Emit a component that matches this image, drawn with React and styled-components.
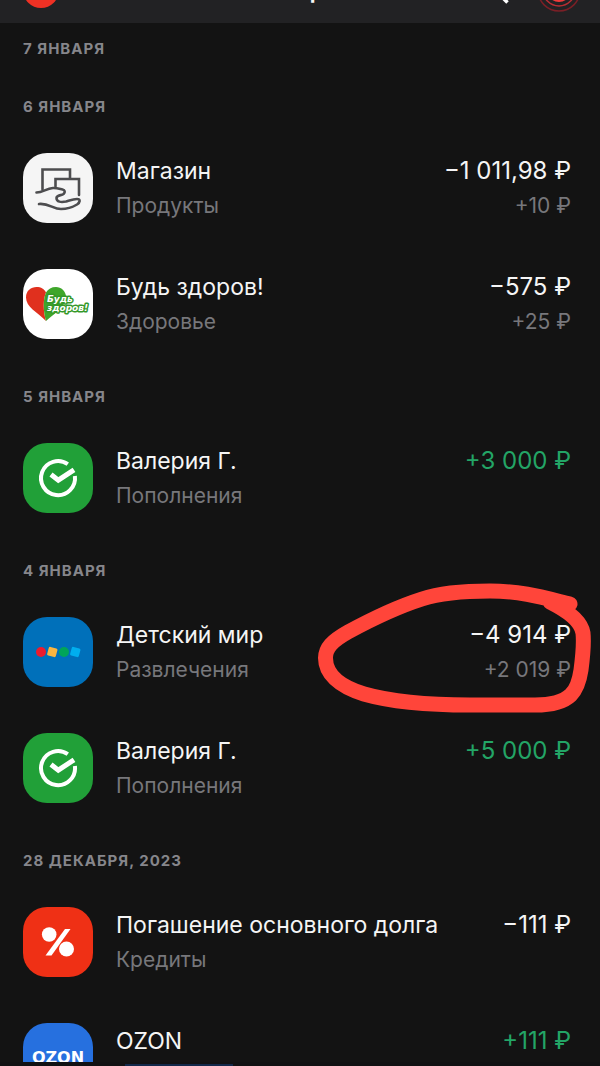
import styled, { createGlobalStyle } from "styled-components";

const sections = [
  { date: "7 января", items: [] },
  {
    date: "6 января",
    items: [
      { icon: "shop", title: "Магазин", category: "Продукты", amount: "−1 011,98 ₽", bonus: "+10 ₽" },
      { icon: "health", title: "Будь здоров!", category: "Здоровье", amount: "−575 ₽", bonus: "+25 ₽" },
    ],
  },
  {
    date: "5 января",
    items: [
      { icon: "sber", title: "Валерия Г.", category: "Пополнения", amount: "+3 000 ₽", income: true },
    ],
  },
  {
    date: "4 января",
    items: [
      { icon: "toys", title: "Детский мир", category: "Развлечения", amount: "−4 914 ₽", bonus: "+2 019 ₽", marked: true },
      { icon: "sber", title: "Валерия Г.", category: "Пополнения", amount: "+5 000 ₽", income: true },
    ],
  },
  {
    date: "28 декабря, 2023",
    items: [
      { icon: "percent", title: "Погашение основного долга", category: "Кредиты", amount: "−111 ₽" },
      { icon: "ozon", title: "OZON", amount: "+111 ₽", income: true },
    ],
  },
];

const tileColors = {
  shop: "#f5f5f5",
  health: "#ffffff",
  sber: "#21a038",
  toys: "#0070ba",
  percent: "#ef3015",
  ozon: "#2670df",
};

function Logo({ name }) {
  switch (name) {
    case "shop":
      return (
        <svg viewBox="0 0 70 70" fill="none" stroke="#4d4d4f" strokeWidth="2.6" strokeLinecap="round">
          <path d="M19.5 36.5V16.5h27.5V25.500" />
          <path d="M32.500 33.500V26h23.500v16" />
          <path d="M13.500 39.500C20 39.500 23 35.500 30 35C34 34.800 37 36 39.500 36.500C42 37 42.500 39 40.500 41C38.500 42.500 33.500 42 33.500 45C33.500 49 38 49.500 43 48.500C48 47 50.500 46 54 46C58 46 57 49.500 54 51.500C49 54.500 44 56 38 56C30 56 26 50 16 51" />
        </svg>
      );
    case "health":
      return (
        <svg viewBox="0 0 70 70">
          <path d="M23 52C14 43 3 38 3 28.500C3 21.500 8 18 13.500 18C18 18 21.500 20 23 23.500C20 30 20 42 23 52Z" fill="#e0301e" />
          <path d="M23 52C20 42 20 30 23 23.500C25 20 28.500 18 33 18C38 18 43 22 43 28C43 38 32 44 23 52Z" fill="#3fa62b" />
          <g
            fontFamily="'DejaVu Sans', sans-serif"
            fontWeight="700"
            fontStyle="italic"
            fontSize="9"
            fill="#fff"
            stroke="#35982a"
            strokeWidth="3"
            paintOrder="stroke"
            strokeLinejoin="round"
          >
            <text x="24" y="33">Будь</text>
            <text x="24" y="42">здоров!</text>
          </g>
        </svg>
      );
    case "sber":
      return (
        <svg viewBox="0 0 70 70" fill="none" stroke="#fff" strokeWidth="4">
          <path d="M44.800 21.200A17 17 0 1 0 51.900 33" />
          <path d="M28 31.500L35.300 37.200L51 26.800" strokeWidth="5" />
        </svg>
      );
    case "toys":
      return (
        <svg viewBox="0 0 70 70">
          <circle cx="18" cy="35" r="5" fill="#ed1c2e" />
          <rect x="24.800" y="30.500" width="9" height="9" rx="1.500" fill="#fbb540" transform="rotate(15 29.300 35)" />
          <circle cx="41" cy="35" r="5" fill="#00a55a" />
          <rect x="47.800" y="30.500" width="9" height="9" rx="1.500" fill="#00aeef" transform="rotate(15 52.300 35)" />
        </svg>
      );
    case "percent":
      return (
        <svg viewBox="0 0 70 70" fill="#fff">
          <circle cx="26.200" cy="27.500" r="7.300" />
          <circle cx="43.500" cy="42" r="7.500" />
          <path d="M42 22h5.500L28.500 48.500H22.500Z" />
        </svg>
      );
    default:
      return <Wordmark>OZON</Wordmark>;
  }
}

function Transaction({ icon, title, category, amount, bonus, income, marked }) {
  return (
    <Row>
      <Tile $color={tileColors[icon]}>
        <Logo name={icon} />
      </Tile>
      <Details>
        <Title>{title}</Title>
        {category && <Note>{category}</Note>}
      </Details>
      <Sums>
        <Amount $income={income}>{amount}</Amount>
        {bonus && <Note>{bonus}</Note>}
      </Sums>
      {marked && (
        <Marker viewBox="0 0 290 145" aria-hidden="true">
          <path
            d="M260 29C235 23 212 16 180 16C150 16 130 18 112 24C90 31 62 44 38 57C22 66 15.500 73 15.500 83C15.500 98 28 111 54 119C82 127 120 130 160 130L225 130C262 130 268 115 271 95C273 80 274 68 273 58C271 45 256 35 240 27"
            fill="none"
            stroke="#ff453a"
            strokeWidth="15"
            strokeLinecap="round"
            strokeLinejoin="round"
          />
        </Marker>
      )}
    </Row>
  );
}

function App() {
  return (
    <Screen>
      <GlobalStyle />
      <TopBar>
        <BarContent>
          <Avatar />
          <Heading>История</Heading>
          <BarActions>
            <IconButton type="button" aria-label="Поиск">
              <svg width="28" height="28" viewBox="0 0 28 28" fill="none" stroke="#fff" strokeWidth="3.500">
                <circle cx="12" cy="12" r="10" />
                <path d="M19 19l7.500 7.500" />
              </svg>
            </IconButton>
            <IconButton type="button" aria-label="Сканер">
              <svg width="44" height="44" viewBox="0 0 44 44" fill="none" strokeWidth="1.500">
                <circle cx="22" cy="22" r="21" stroke="#7a1f26" />
                <circle cx="22" cy="22" r="16" stroke="#b82d33" />
                <circle cx="22" cy="22" r="11" stroke="#ef3a3a" strokeWidth="2" />
              </svg>
            </IconButton>
          </BarActions>
        </BarContent>
      </TopBar>
      <History>
        {sections.map(({ date, items }) => (
          <Section key={date}>
            <DateTitle>{date}</DateTitle>
            <List>
              {items.map((item) => (
                <Transaction key={item.title} {...item} />
              ))}
            </List>
          </Section>
        ))}
      </History>
      <BottomEdge />
    </Screen>
  );
}

export default App;

const GlobalStyle = createGlobalStyle`
  * {
    box-sizing: border-box;
  }

  body {
    margin: 0;
    background: #131313;
    color: #f5f5f5;
    font-family: Inter, "Liberation Sans", sans-serif;
  }
`;

const Screen = styled.div`
  display: flex;
  flex-direction: column;
  height: 100vh;
  overflow: hidden;
`;

const TopBar = styled.header`
  flex: none;
  display: flex;
  align-items: flex-end;
  height: 23px;
  overflow: hidden;
  padding: 0 19px 11px 23px;
  background: #222224;
`;

const BarContent = styled.div`
  flex: 1;
  display: grid;
  grid-template-columns: 1fr auto 1fr;
  align-items: center;
  height: 44px;
`;

const Avatar = styled.span`
  width: 36px;
  height: 36px;
  border-radius: 50%;
  background: #ef3124;
`;

const Heading = styled.h1`
  margin: 0;
  font-size: 24px;
  line-height: 30px;
  font-weight: 600;
`;

const BarActions = styled.div`
  display: flex;
  align-items: center;
  justify-content: flex-end;
  gap: 28px;
`;

const IconButton = styled.button`
  display: flex;
  padding: 0;
  border: 0;
  background: none;
  cursor: pointer;
`;

const History = styled.main`
  flex: 1;
  min-height: 0;
  overflow: hidden;
`;

const Section = styled.section`
  padding-top: 26px;

  &:first-child {
    padding-top: 17px;
  }
`;

const DateTitle = styled.h2`
  margin: 0;
  padding: 0 23px 14px;
  font-size: 15px;
  line-height: 18px;
  font-weight: 700;
  letter-spacing: 1px;
  text-transform: uppercase;
  color: #86868b;
`;

const List = styled.ul`
  margin: 0;
  padding: 0;
  list-style: none;
`;

const Row = styled.li`
  position: relative;
  display: flex;
  align-items: flex-start;
  gap: 23px;
  padding: 23px 29px 23px 23px;
`;

const Tile = styled.div`
  flex: none;
  display: grid;
  place-items: center;
  width: 70px;
  height: 70px;
  border-radius: 24px;
  overflow: hidden;
  background: ${({ $color }) => $color};
`;

const Wordmark = styled.span`
  font-family: "DejaVu Sans", sans-serif;
  font-size: 16px;
  line-height: 20px;
  font-weight: 700;
  color: #fff;
`;

const Details = styled.div`
  flex: 1;
  min-width: 0;
  padding-top: 3px;
`;

const Sums = styled.div`
  padding-top: 3px;
  text-align: right;
  white-space: nowrap;
`;

const Title = styled.div`
  font-size: 23px;
  line-height: 30px;
`;

const Amount = styled(Title)`
  font-size: 24px;
  color: ${({ $income }) => ($income ? "#23a566" : "#f5f5f5")};
`;

const Note = styled.div`
  margin-top: 6px;
  font-size: 21px;
  line-height: 28px;
  color: #77777b;
`;

const Marker = styled.svg`
  position: absolute;
  top: -19px;
  right: 0;
  width: 290px;
  height: 145px;
  pointer-events: none;
`;

const BottomEdge = styled.div`
  flex: none;
  height: 4px;
  padding: 2px 0 0 125px;
  background: #111113;

  &::after {
    content: "";
    display: block;
    width: 108px;
    height: 2px;
    background: #12284a;
  }
`;
